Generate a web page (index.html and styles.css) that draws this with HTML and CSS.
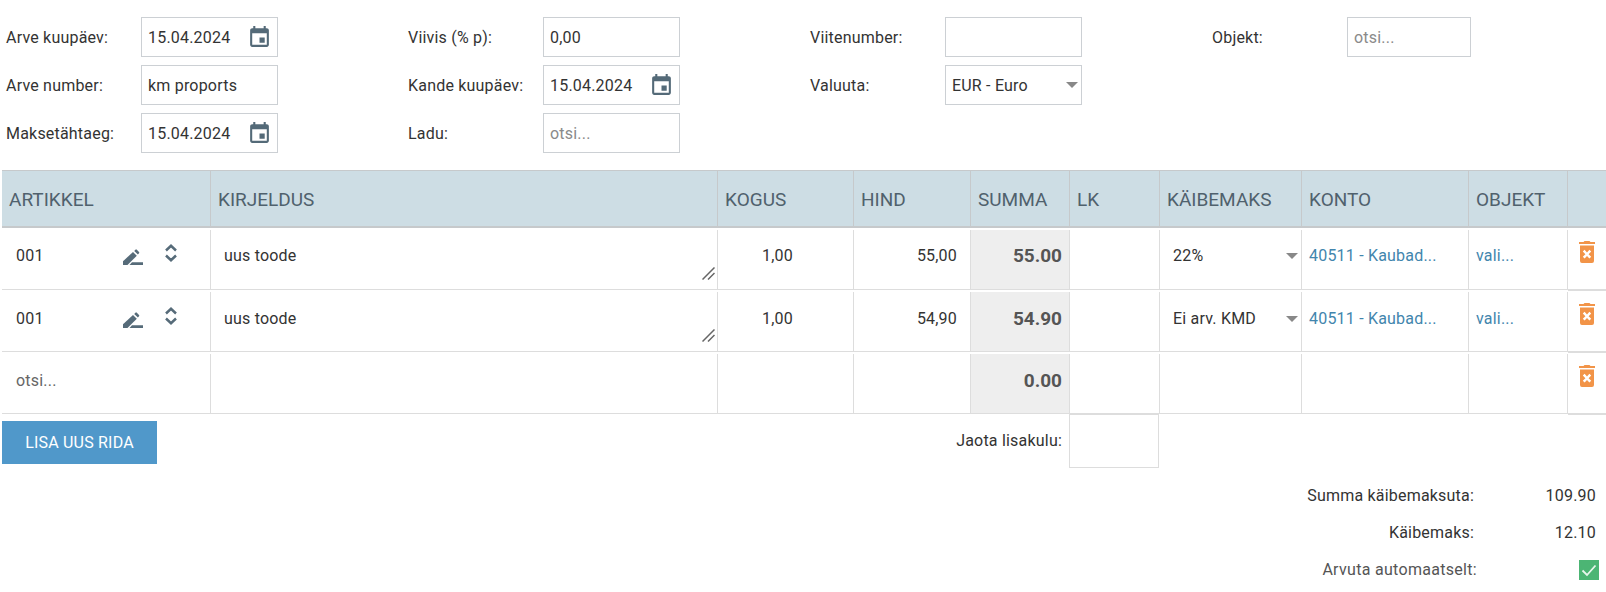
FILE: index.html
```html
<!DOCTYPE html>
<html lang="et">
<head>
<meta charset="utf-8">
<title>Arve</title>
<link rel="stylesheet" href="styles.css">
</head>
<body>
<svg class="defs" width="0" height="0" aria-hidden="true">
  <symbol id="i-cal" viewBox="0 0 24 24"><path d="M17 12h-5v5h5v-5zM16 1v2H8V1H6v2H5c-1.11 0-1.99.9-1.99 2L3 19c0 1.1.89 2 2 2h14c1.1 0 2-.9 2-2V5c0-1.1-.9-2-2-2h-1V1h-2zm3 18H5V8h14v11z"/></symbol>
  <symbol id="i-edit" viewBox="0 0 20 16"><path d="M0 16v-3.800L10 3 13.800 6.800 4.500 16z"/><path d="M11.200 1.900 12.400.7a1 1 0 0 1 1.400 0l2.200 2.200a1 1 0 0 1 0 1.400l-1.100 1.200z"/><path d="M9 13.200h11V16H6.500z"/></symbol>
  <symbol id="i-unfold" viewBox="0 0 12 18"><path d="M1 6.500 6 1.800 11 6.500M1 11.500 6 16.200 11 11.500" fill="none" stroke="currentColor" stroke-width="2.500"/></symbol>
  <symbol id="i-trash" viewBox="0 0 16 22"><path d="M5.500 0h5l1 1H16v2H0V1h4.500z"/><path fill-rule="evenodd" d="M1 4.500h14V20a2 2 0 0 1-2 2H3a2 2 0 0 1-2-2zM5.600 8.800 3.800 10.600 6.400 13.200 3.800 15.800 5.600 17.600 8 15 10.400 17.600 12.200 15.800 9.600 13.200 12.200 10.600 10.400 8.800 8 11.400z"/></symbol>
</svg>

<form class="head">
  <div class="head-col">
    <div class="field"><span class="lbl">Arve kuupäev:</span><div class="box"><span>15.04.2024</span><svg class="cal"><use href="#i-cal"/></svg></div></div>
    <div class="field"><span class="lbl">Arve number:</span><div class="box"><span>km proports</span></div></div>
    <div class="field"><span class="lbl">Maksetähtaeg:</span><div class="box"><span>15.04.2024</span><svg class="cal"><use href="#i-cal"/></svg></div></div>
  </div>
  <div class="head-col">
    <div class="field"><span class="lbl">Viivis (% p):</span><div class="box"><span>0,00</span></div></div>
    <div class="field"><span class="lbl">Kande kuupäev:</span><div class="box"><span>15.04.2024</span><svg class="cal"><use href="#i-cal"/></svg></div></div>
    <div class="field"><span class="lbl">Ladu:</span><div class="box ph"><span>otsi...</span></div></div>
  </div>
  <div class="head-col">
    <div class="field"><span class="lbl">Viitenumber:</span><div class="box"></div></div>
    <div class="field"><span class="lbl">Valuuta:</span><div class="box"><span>EUR - Euro</span><i class="caret"></i></div></div>
  </div>
  <div class="head-col">
    <div class="field"><span class="lbl">Objekt:</span><div class="box narrow ph"><span>otsi...</span></div></div>
  </div>
</form>

<section class="table">
  <div class="row hrow">
    <div class="c">ARTIKKEL</div><div class="c">KIRJELDUS</div><div class="c">KOGUS</div><div class="c">HIND</div><div class="c">SUMMA</div><div class="c">LK</div><div class="c">KÄIBEMAKS</div><div class="c">KONTO</div><div class="c">OBJEKT</div><div class="c del"></div>
  </div>
  <div class="row first">
    <div class="c art"><span class="code">001</span><svg class="edit"><use href="#i-edit"/></svg><svg class="unfold"><use href="#i-unfold"/></svg></div>
    <div class="c desc">uus toode<svg class="grip" viewBox="0 0 13 13"><path d="M.5 12.500 12.500.5M6 12.500l6.500-6.500"/></svg></div>
    <div class="c qty">1,00</div>
    <div class="c price">55,00</div>
    <div class="c sum">55.00</div>
    <div class="c"></div>
    <div class="c vat">22%<i class="caret"></i></div>
    <div class="c link">40511 - Kaubad...</div>
    <div class="c link">vali...</div>
    <div class="c del"><svg class="trash"><use href="#i-trash"/></svg></div>
  </div>
  <div class="row">
    <div class="c art"><span class="code">001</span><svg class="edit"><use href="#i-edit"/></svg><svg class="unfold"><use href="#i-unfold"/></svg></div>
    <div class="c desc">uus toode<svg class="grip" viewBox="0 0 13 13"><path d="M.5 12.500 12.500.5M6 12.500l6.500-6.500"/></svg></div>
    <div class="c qty">1,00</div>
    <div class="c price">54,90</div>
    <div class="c sum">54.90</div>
    <div class="c"></div>
    <div class="c vat">Ei arv. KMD<i class="caret"></i></div>
    <div class="c link">40511 - Kaubad...</div>
    <div class="c link">vali...</div>
    <div class="c del"><svg class="trash"><use href="#i-trash"/></svg></div>
  </div>
  <div class="row">
    <div class="c art search">otsi...</div>
    <div class="c"></div>
    <div class="c"></div>
    <div class="c"></div>
    <div class="c sum">0.00</div>
    <div class="c"></div>
    <div class="c"></div>
    <div class="c"></div>
    <div class="c"></div>
    <div class="c del"><svg class="trash"><use href="#i-trash"/></svg></div>
  </div>
</section>

<div class="actions">
  <button class="add" type="button">LISA UUS RIDA</button>
  <div class="extra"><span>Jaota lisakulu:</span><div class="extra-box"></div></div>
</div>

<div class="totals">
  <div class="tot"><span class="tl">Summa käibemaksuta:</span><span class="tv">109.90</span></div>
  <div class="tot"><span class="tl">Käibemaks:</span><span class="tv">12.10</span></div>
  <div class="tot auto"><span class="tl">Arvuta automaatselt:</span><span class="tv"><svg class="check" viewBox="0 0 20 20"><rect width="20" height="20"/><path d="M3.500 10.500 8 15 16.500 5.500"/></svg></span></div>
</div>
</body>
</html>
```
FILE: styles.css
```css
* { box-sizing: border-box; }
html, body { margin: 0; padding: 0; }
body {
  width: 1606px;
  height: 592px;
  overflow: hidden;
  background: #fff;
  color: #333;
  font-family: Roboto, "Liberation Sans", sans-serif;
  font-size: 16px;
  letter-spacing: .2px;
}
.defs { display: block; }

.head {
  display: grid;
  grid-template-columns: repeat(4, 402px);
  padding: 17px 0 0 6px;
  height: 170px;
}
.head-col { display: flex; flex-direction: column; gap: 8px; }
.field { display: flex; align-items: center; height: 40px; }
.lbl { width: 135px; flex: none; }
.box {
  width: 137px;
  height: 40px;
  border: 1px solid #ccd0d4;
  display: flex;
  align-items: center;
  justify-content: space-between;
  padding: 0 5px 0 6px;
  background: #fff;
}
.box.narrow { width: 124px; }
.box.ph { color: #8a8a8a; }
.cal { width: 25px; height: 25px; fill: #546a78; flex: none; }
.caret {
  width: 0; height: 0;
  border-left: 6px solid transparent;
  border-right: 6px solid transparent;
  border-top: 6px solid #888;
  flex: none;
  margin-right: -2px;
}

.table { margin-left: 2px; }
.row {
  display: grid;
  grid-template-columns: 209px 507px 136px 117px 99px 90px 142px 167px 99px 38px;
  height: 62px;
  border-bottom: 1px solid #ddd;
  padding-top: 2px;
}
.c {
  border-right: 1px solid #ddd;
  display: flex;
  align-items: center;
  position: relative;
  min-width: 0;
  padding-bottom: 6px;
}
.first .c { padding-bottom: 8px; }
.row .del {
  border-right: 0;
  justify-content: center;
  align-items: flex-start;
  padding: 11px 0 0;
  box-shadow: 0 2px 0 #ddd;
}
.row.first .del { padding-top: 11px; }
.hrow {
  height: 58px;
  padding-top: 0;
  background: #cddde4;
  border-top: 1px solid #c6c9cb;
  border-bottom: 2px solid #c6c9cb;
}
.hrow .c {
  border-right-color: #c6c9cb;
  color: #50616d;
  font-size: 19px;
  letter-spacing: 0;
  padding: 2px 0 0 7px;
}
.hrow .del { box-shadow: none; }
.art { padding-left: 14px; }
.code { width: 107px; flex: none; }
.edit { width: 20px; height: 16px; fill: #566b79; flex: none; margin-top: 3px; }
.unfold { width: 12px; height: 18px; color: #566b79; flex: none; margin: 0 0 5px 22px; }
.desc { padding-left: 13px; }
.grip { position: absolute; right: 2px; bottom: 9px; width: 13px; height: 13px; fill: none; stroke: #666; stroke-width: 1.500; }
.qty { justify-content: flex-end; padding-right: 60px; }
.price { justify-content: flex-end; padding-right: 13px; }
.sum {
  justify-content: flex-end;
  padding-right: 7px;
  background: #eee;
  font-weight: 700;
  font-size: 19px;
  letter-spacing: 0;
  color: #555;
}
.vat { justify-content: space-between; padding-left: 13px; padding-right: 5px; }
.link { color: #4285ad; padding-left: 7px; }
.search { color: #666; }
.trash { width: 16px; height: 22px; fill: #f29448; }

.actions { display: flex; height: 55px; margin-left: 2px; }
.add {
  width: 155px;
  height: 43px;
  margin-top: 7px;
  border: 0;
  background: #5098ca;
  color: #fff;
  font-family: inherit;
  font-size: 16px;
  font-weight: 400;
  letter-spacing: .2px;
  padding: 0;
}
.extra { margin-left: 797px; display: flex; align-items: center; gap: 7px; height: 54px; }
.extra span { width: 108px; text-align: right; margin-bottom: 2px; white-space: nowrap; }
.extra-box { width: 90px; height: 54px; border: 1px solid #ddd; }

.totals { margin-top: 8px; }
.tot { display: flex; justify-content: flex-end; height: 37px; align-items: center; padding-right: 10px; }
.tl { width: 300px; text-align: right; }
.tv { width: 122px; text-align: right; }
.auto .tl { color: #555; letter-spacing: .3px; }
.auto .tv { display: flex; justify-content: flex-end; margin-right: -3px; }
.check { width: 20px; height: 20px; }
.check rect { fill: #4cb574; }
.check path { fill: none; stroke: #e8f6ec; stroke-width: 1.800; }
```
